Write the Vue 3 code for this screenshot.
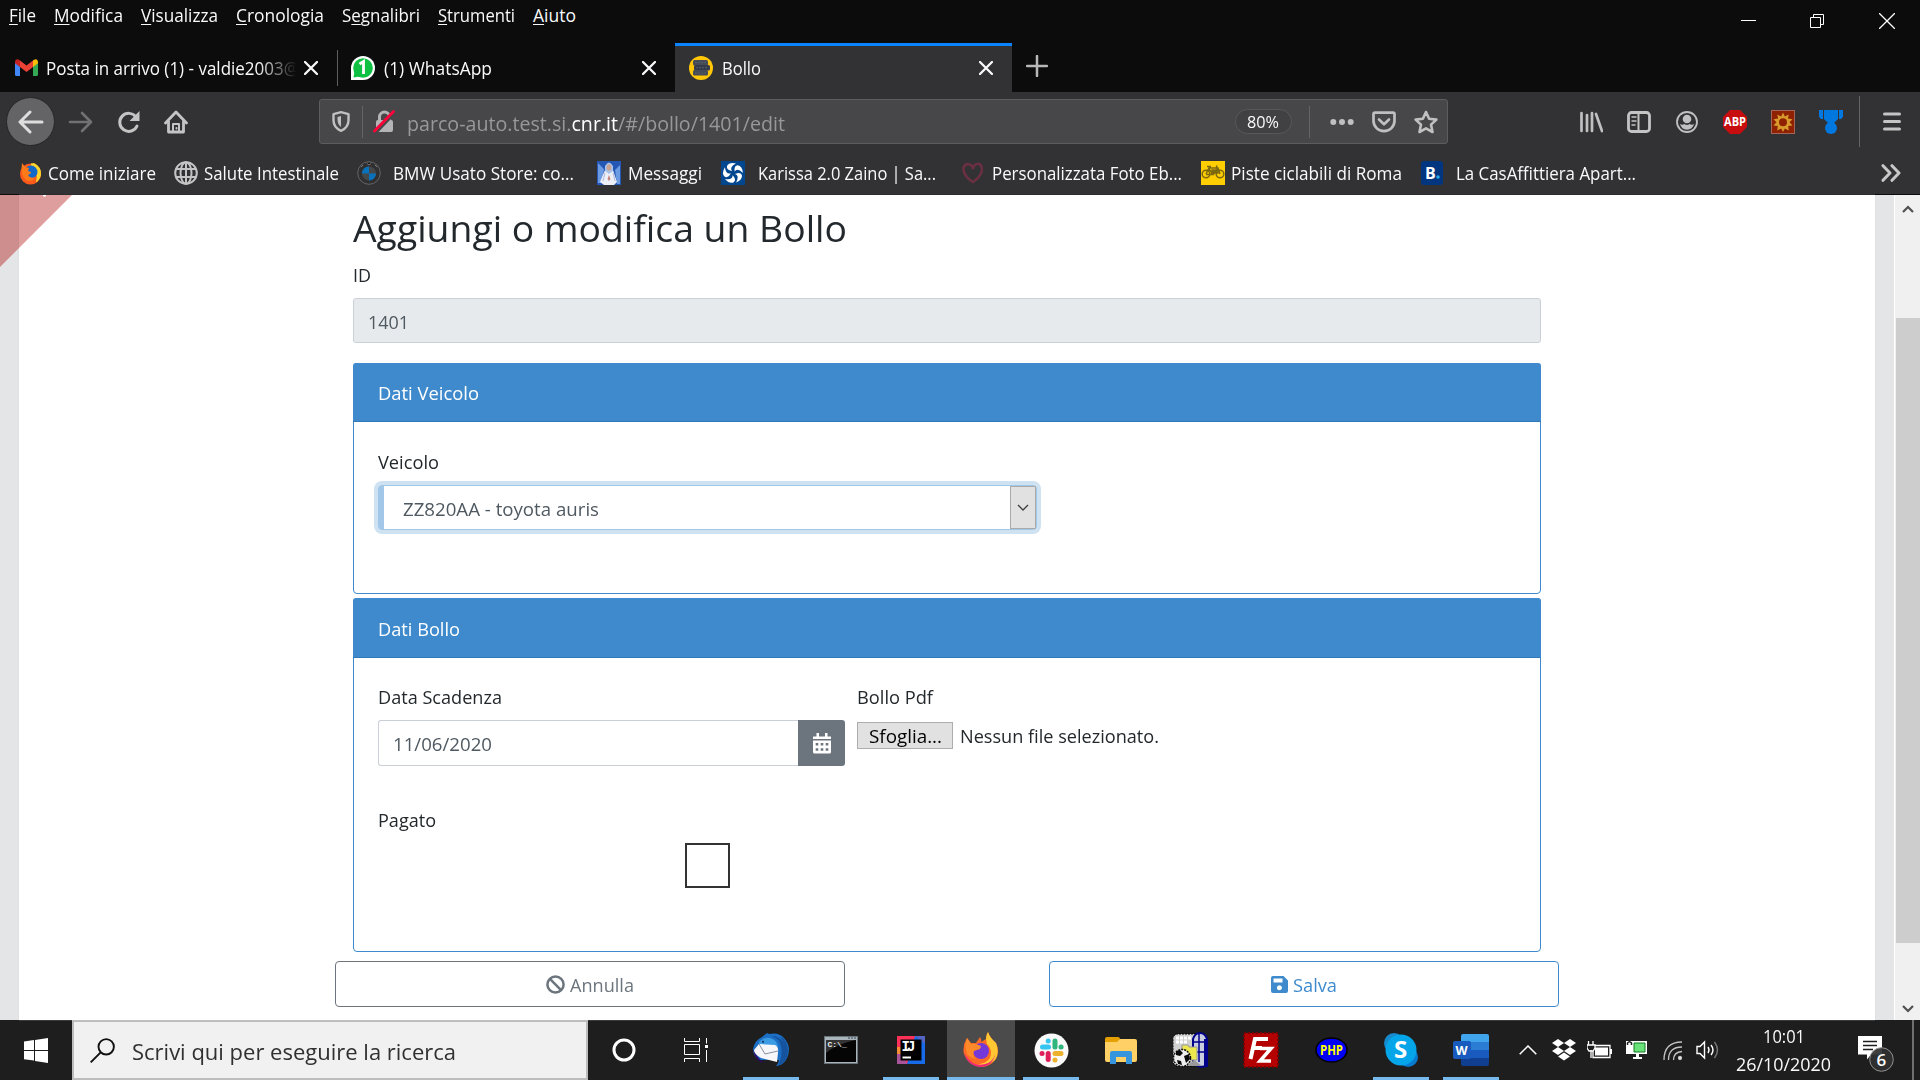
<script setup>
const menu = [
  { key: 'F', rest: 'ile', w: 27 },
  { key: 'M', rest: 'odifica', w: 69 },
  { key: 'V', rest: 'isualizza', w: 77 },
  { key: 'C', rest: 'ronologia', w: 88 },
  { pre: 'S', key: 'e', rest: 'gnalibri', w: 78 },
  { key: 'S', rest: 'trumenti', w: 77 },
  { key: 'A', rest: 'iuto', w: 43 },
]

// Condenses or widens a label horizontally to the width given in pixels
const vFit = {
  mounted(el, { value }) {
    const natural = el.getBoundingClientRect().width
    el.style.width = `${value}px`
    el.style.transform = `scaleX(${value / natural})`
  },
}
</script>

<template>
  <div class="screen">
    <header class="titlebar">
      <nav class="menu">
        <span v-for="m in menu" :key="m.rest" v-fit="m.w" class="fit">{{ m.pre }}<u>{{ m.key }}</u>{{ m.rest }}</span>
      </nav>
      <div class="winctl">
        <svg width="16" height="16" viewBox="0 0 16 16"><path d="M0 7.5h15" stroke="#fff" /></svg>
        <svg width="16" height="16" viewBox="0 0 16 16" fill="none" stroke="#fff"><path d="M.5 4.500h10v10h-10zM3.500 4.500v-3h10v10h-3" /></svg>
        <svg width="16" height="16" viewBox="0 0 16 16"><path d="M0 0l16 16M16 0L0 16" stroke="#fff" stroke-width="1.300" /></svg>
      </div>
    </header>

    <div class="tabs">
      <div class="tab first">
        <svg class="gmail" width="23" height="17" viewBox="0 0 23 17">
          <path d="M0 3l5 4v10H1.500Q0 17 0 15.500z" fill="#4285f4" /><path d="M23 3l-5 4v10h3.500q1.500 0 1.500-1.500z" fill="#34a853" />
          <path d="M5 1.500l6.500 5 6.500-5V8l-6.500 5L5 8z" fill="#ea4335" /><path d="M0 2.500Q1-1 4 .700L5 1.500V8L0 4.200z" fill="#c5221f" /><path d="M23 2.500Q22-1 19 .700L18 1.500V8l5-3.800z" fill="#fbbc04" />
        </svg>
        <div class="fade"><span v-fit="253" class="fit">Posta in arrivo (1) - valdie2003@</span></div>
        <svg class="x" width="14" height="14" viewBox="0 0 14 14"><path d="M1 1l12 12M13 1L1 13" /></svg>
      </div>
      <div class="tab second">
        <svg width="24" height="24" viewBox="0 0 24 24"><path d="M0 24V12A12 12 0 1 1 12 24z" fill="#fff" /><circle cx="12" cy="12" r="9.800" fill="#0fc143" /><path d="M2.500 21.500l1-6 5 5z" fill="#0fc143" /><path d="M8.500 8l4-2.500V18" fill="none" stroke="#fff" stroke-width="2.800" /></svg>
        <span v-fit="108" class="fit">(1) WhatsApp</span>
        <svg class="x" width="14" height="14" viewBox="0 0 14 14"><path d="M1 1l12 12M13 1L1 13" /></svg>
      </div>
      <div class="tab active">
        <svg width="24" height="24" viewBox="0 0 24 24"><circle cx="12" cy="12" r="12" fill="#ffc708" /><rect x="4" y="4" width="15" height="5.500" rx="1.500" fill="#454b57" /><rect x="5" y="9" width="16" height="5.500" rx="1.500" fill="#353b49" /><rect x="4" y="14" width="15" height="5.500" rx="1.500" fill="#454b57" /><path d="M6 6.500h12M7 11.700h12M6 17h12" stroke="#555c69" stroke-dasharray="2 1" /></svg>
        <span v-fit="39" class="fit">Bollo</span>
        <svg class="x" width="14" height="14" viewBox="0 0 14 14"><path d="M1 1l12 12M13 1L1 13" /></svg>
      </div>
      <svg class="plus" width="22" height="22" viewBox="0 0 22 22"><path d="M11 1v20M1 11h20" stroke="#b8b8b8" stroke-width="2.500" stroke-linecap="round" /></svg>
    </div>

    <div class="navbar">
      <div class="back"><svg width="26" height="24" viewBox="0 0 26 24" fill="none" stroke="#dedede" stroke-width="3" stroke-linecap="round" stroke-linejoin="round"><path d="M24 12H2M12 2L2 12l10 10" /></svg></div>
      <svg class="fwd" width="25" height="22" viewBox="0 0 25 22" fill="none" stroke="#717173" stroke-width="2.600" stroke-linecap="round" stroke-linejoin="round"><path d="M2 11h21M14 2l9 9-9 9" /></svg>
      <svg class="reload" width="24" height="24" viewBox="0 0 24 24"><path d="M19 7A9 9 0 1 0 20 16" fill="none" stroke="#c4c4c5" stroke-width="3" stroke-linecap="round" /><path d="M22.500 1v10h-10z" fill="#c4c4c5" /></svg>
      <svg class="home" width="24" height="24" viewBox="0 0 24 24" fill="none" stroke="#c4c4c5" stroke-width="2.800" stroke-linejoin="round" stroke-linecap="round"><path d="M1.500 13L12 2l10.500 11M4.500 11v11h15V11" /><path d="M9 21v-7h6v7" stroke-width="2" /><path d="M12.500 18v.500" stroke-width="2" /></svg>
      <div class="url">
        <svg class="shield" width="18" height="21" viewBox="0 0 18 21"><path d="M9 1.200l7.500 2v6c0 5-3.500 8.800-7.500 10.600C5 18 1.500 14.200 1.500 9.200v-6z" fill="none" stroke="#c0c0c1" stroke-width="2.400" stroke-linejoin="round" /><path d="M9 5v11Q5.500 13 5.500 8.500V6z" fill="#c0c0c1" /></svg>
        <i class="vr"></i>
        <svg class="lock" width="22" height="23" viewBox="0 0 22 23"><rect x="3" y="10" width="17" height="12" rx="2" fill="#b4b4b6" /><path d="M6.500 11V7a5 5 0 0 1 10 0v4" fill="none" stroke="#b4b4b6" stroke-width="3" /><path d="M3 22.500L21 3.500" stroke="#474749" stroke-width="3" /><path d="M1.500 21L20.500 1.500" stroke="#ff0039" stroke-width="2.800" stroke-linecap="round" /></svg>
        <span v-fit="378" class="fit address">parco-auto.test.si.<b>cnr.it</b>/#/bollo/1401/edit</span>
        <div class="pill"><span v-fit="32" class="fit">80%</span></div>
        <i class="vr wide"></i>
        <svg class="dots" width="24" height="8" viewBox="0 0 24 8" fill="#c0c0c1"><circle cx="3.300" cy="4" r="3" /><circle cx="12" cy="4" r="3" /><circle cx="20.700" cy="4" r="3" /></svg>
        <svg class="pocket" width="24" height="22" viewBox="0 0 24 22" fill="none" stroke="#c0c0c1" stroke-width="2.700" stroke-linecap="round" stroke-linejoin="round"><path d="M3 1.700h18q1.500 0 1.500 1.500v6.500a10.500 10.500 0 0 1-21 0V3.200Q1.500 1.700 3 1.700z" /><path d="M7 8.500l5 4.700 5-4.700" /></svg>
        <svg class="star" width="24" height="24" viewBox="0 0 24 24"><path d="M12 2l3.100 6.700 7.300.900-5.400 5 1.500 7.400-6.500-3.700L5.500 22 7 14.600l-5.400-5 7.300-.900z" fill="none" stroke="#c0c0c1" stroke-width="2.600" stroke-linejoin="round" /></svg>
      </div>
      <div class="tools">
        <svg width="24" height="24" viewBox="0 0 24 24" fill="none" stroke="#c0c0c1" stroke-width="2.700" stroke-linecap="round"><path d="M2.500 3v18M8 5v16M13 3v18M17 4l6 17" /></svg>
        <svg width="24" height="24" viewBox="0 0 24 24" fill="none" stroke="#c4c4c5" stroke-width="2.800"><rect x="1.500" y="2.500" width="21" height="19" rx="3" /><path d="M11.500 2v20" stroke-width="2" /><path d="M4.500 7h5M4.500 11h5M4.500 15h4" stroke-width="1.700" /></svg>
        <svg width="24" height="24" viewBox="0 0 24 24"><circle cx="12" cy="12" r="10" fill="none" stroke="#c0c0c1" stroke-width="1.800" /><circle cx="12" cy="9" r="4.300" fill="#c0c0c1" /><path d="M5 14q2 1.500 4.500 0 2.500 2.200 5 0 2.500 1.500 4.500 0-1.500 5.700-7 5.700T5 14z" fill="#c0c0c1" /></svg>
        <svg width="24" height="24" viewBox="0 0 24 24"><path d="M7 0h10l7 7v10l-7 7H7l-7-7V7z" fill="#c70d0d" /><text x="1" y="16.300" font-size="11.500" font-weight="700" fill="#fff" textLength="22" lengthAdjust="spacingAndGlyphs">ABP</text></svg>
        <svg width="24" height="24" viewBox="0 0 24 24"><rect x=".500" y=".500" width="23" height="23" fill="#8f2100" stroke="#a5665a" /><path d="M12 2.500l1.800 4 4-2-1 4 4.700.700-3 3 3 3.300-4.300.500.600 4.500-4-2L12 22l-1.800-3.500-4 2 .600-4.500-4.300-.500 3-3.300-3-3 4.700-.700-1-4 4 2z" fill="#d89b2b" /><circle cx="12" cy="12.300" r="4" fill="#8f2100" /></svg>
        <svg width="24" height="24" viewBox="0 0 24 24" fill="#0078e0"><path d="M0 0h4v9H2L0 7zM20 0h4v7l-2 2h-2zM5 0h14v9l-4 4H9L5 9z" /><circle cx="12" cy="18" r="6" /></svg>
      </div>
      <i class="vr menu-rule"></i>
      <svg class="burger" width="18" height="19" viewBox="0 0 18 19"><path d="M1.500 2h15M1.500 9.500h15M1.500 17h15" stroke="#c4c4c5" stroke-width="3" stroke-linecap="round" /></svg>
    </div>

    <div class="bookmarks">
      <svg width="24" height="24" viewBox="0 0 24 24"><circle cx="11.500" cy="13" r="10.500" fill="#ff5a1c" /><path d="M12 2.500l3-.500q8 4 7 12-1 5-5 7.500Q20 10 12 6z" fill="#ffd52d" /><circle cx="12" cy="11" r="6.500" fill="#1269c9" /><path d="M3 2l3 4 4 1-1 3 3 1q0 2-3 3 2 4 7 2-3 6-9 3-6-5-4-17z" fill="#ff7a18" /></svg>
      <span v-fit="108" class="fit g4 m18">Come iniziare</span>
      <svg width="24" height="24" viewBox="0 0 24 24" fill="none" stroke="#c4c4c5" stroke-width="2"><circle cx="12" cy="12" r="10.800" /><ellipse cx="12" cy="12" rx="5.500" ry="10.800" /><path d="M12 1v22M2 8h20M2 16h20" /></svg>
      <span v-fit="135" class="fit g6 m18">Salute Intestinale</span>
      <svg width="24" height="24" viewBox="0 0 24 24"><circle cx="12" cy="12" r="11.300" fill="#303033" stroke="#656567" /><circle cx="12" cy="12.500" r="7" fill="#45484a" /><path d="M12 12.500v-7a7 7 0 0 0-7 7zM12 12.500v7a7 7 0 0 0 7-7z" fill="#0872bd" /><path d="M4 6l2-2M10 2.500l2 1.500 2-1.500M18 4l2 2" stroke="#777" /></svg>
      <span v-fit="181" class="fit g12 m23">BMW Usato Store: co...</span>
      <svg width="24" height="24" viewBox="0 0 24 24"><path d="M0 0h24v24H0z" fill="#2456b4" /><path d="M1 2l6 6L5 22H1zM23 4l-5 5 2 14h3z" fill="#6d9be1" /><path d="M8 9q4-3 8 0l4 12-3 3H7l-4-3z" fill="#eef0f8" /><path d="M8 10V5q4-7 8 0v5l-4 3z" fill="#a8c2eb" /><ellipse cx="12" cy="6.500" rx="2.300" ry="3.200" fill="#c9a391" /><path d="M12 14l-1.500 4 1.500 2 1.500-2z" fill="#c3847b" /><path d="M8 12l-2 8M16 12l2 8" stroke="#aeb9d8" /></svg>
      <span v-fit="74" class="fit g7 m19">Messaggi</span>
      <svg width="24" height="24" viewBox="0 0 24 24"><path d="M0 0h24v24H0z" fill="#00478f" /><g fill="#fff"><path d="M15 2.500Q8 1 6 5q-1 4 5 5Q8 6 15 2.500z" /><path d="M15 2.500Q8 1 6 5q-1 4 5 5Q8 6 15 2.500z" transform="rotate(72 12 12)" /><path d="M15 2.500Q8 1 6 5q-1 4 5 5Q8 6 15 2.500z" transform="rotate(144 12 12)" /><path d="M15 2.500Q8 1 6 5q-1 4 5 5Q8 6 15 2.500z" transform="rotate(216 12 12)" /><path d="M15 2.500Q8 1 6 5q-1 4 5 5Q8 6 15 2.500z" transform="rotate(288 12 12)" /></g></svg>
      <span v-fit="178" class="fit g13 m26">Karissa 2.0 Zaino | Sa...</span>
      <svg width="22" height="22" viewBox="0 0 22 22"><path d="M11 7Q10 2 5 2 0 4 2 10t9 10q9-6 9-13-1-6-5-5-3 0-4 5" fill="none" stroke="#762f45" stroke-width="2.500" opacity=".85" /></svg>
      <span v-fit="190" class="fit g8 m19">Personalizzata Foto Eb...</span>
      <svg width="24" height="24" viewBox="0 0 24 24"><path d="M0 0h24v24H0z" fill="#ffcd00" /><g fill="none" stroke="#7d690f" stroke-width="1.500"><circle cx="5" cy="13" r="3.800" /><circle cx="19" cy="13" r="3.800" /><path d="M5 13l3-6h9l2 6M8 8l4 5.500H5M12 13.500L17 7M6 5.500h4M16 4.500l-1 3" /><path d="M11 9h6v3h-6z" fill="#7d690f" /></g></svg>
      <span v-fit="171" class="fit g6 m18">Piste ciclabili di Roma</span>
      <svg width="24" height="24" viewBox="0 0 24 24"><rect x="1" width="22" height="24" rx="3" fill="#003580" /><text x="5" y="17.500" font-size="16" font-weight="700" fill="#fff">B</text><circle cx="18" cy="16" r="1.800" fill="#22a7e5" /></svg>
      <span v-fit="180" class="fit g12">La CasAffittiera Apart...</span>
      <svg class="more" width="21" height="18" viewBox="0 0 21 18" fill="none" stroke="#c8c8c9" stroke-width="3" stroke-linecap="round" stroke-linejoin="round"><path d="M3 1.700L10 9l-7 7.300M12 1.700L19 9l-7 7.300" /></svg>
    </div>

    <main class="viewport">
      <div class="page">
        <h2><span v-fit="494" class="fit">Aggiungi o modifica un Bollo</span></h2>
        <div class="label"><span v-fit="18" class="fit">ID</span></div>
        <div class="control readonly"><span v-fit="41" class="fit">1401</span></div>

        <section class="card vehicle">
          <div class="card-head"><span v-fit="101" class="fit">Dati Veicolo</span></div>
          <div class="card-body">
            <div class="label"><span v-fit="61" class="fit">Veicolo</span></div>
            <div class="select">
              <span v-fit="196" class="fit">ZZ820AA - toyota auris</span>
              <div class="drop"><svg width="12" height="8" viewBox="0 0 12 8"><path d="M1 1l5 5 5-5" fill="none" stroke="#404040" stroke-width="1.400" /></svg></div>
            </div>
          </div>
        </section>

        <section class="card tax">
          <div class="card-head"><span v-fit="82" class="fit">Dati Bollo</span></div>
          <div class="card-body columns">
            <div class="col">
              <div class="label"><span v-fit="124" class="fit">Data Scadenza</span></div>
              <div class="datebox">
                <div class="control"><span v-fit="99" class="fit">11/06/2020</span></div>
                <div class="addon">
                  <svg width="18" height="21" viewBox="0 0 18 21"><path d="M0 3.500h18V6H0zM0 7.500h18V19q0 1.500-1.500 1.500h-15Q0 20.500 0 19zM3.500 0h2.500v4H3.500zM12 0h2.500v4H12z" fill="#fff" /><path d="M2.700 10h2.600v2.500H2.700zM7.700 10h2.600v2.500H7.700zM12.700 10h2.600v2.500h-2.600zM2.700 15.200h2.600v2.500H2.700zM7.700 15.200h2.600v2.500H7.700zM12.700 15.200h2.600v2.500h-2.600z" fill="#6c757d" /></svg>
                </div>
              </div>
              <div class="label paid"><span v-fit="58" class="fit">Pagato</span></div>
              <div class="check"></div>
            </div>
            <div class="col">
              <div class="label"><span v-fit="76" class="fit">Bollo Pdf</span></div>
              <div class="file">
                <div class="browse"><span v-fit="73" class="fit">Sfoglia...</span></div>
                <span v-fit="199" class="fit">Nessun file selezionato.</span>
              </div>
            </div>
          </div>
        </section>

        <div class="actions">
          <div class="btn cancel">
            <svg width="19" height="19" viewBox="0 0 19 19" fill="none" stroke="#6c757d" stroke-width="2.500"><circle cx="9.500" cy="9.500" r="8.100" /><path d="M3.700 3.700l11.600 11.600" /></svg>
            <span v-fit="64" class="fit">Annulla</span>
          </div>
          <div class="btn save">
            <svg width="17" height="17" viewBox="0 0 17 17"><path fill-rule="evenodd" d="M2 0h10.500L17 4.500V15q0 2-2 2H2q-2 0-2-2V2q0-2 2-2zM2.500 2.500v4h9v-4zM8.500 9.200a2.500 2.500 0 1 0 0 5 2.500 2.500 0 0 0 0-5z" fill="#3e8acc" /></svg>
            <span v-fit="44" class="fit">Salva</span>
          </div>
        </div>
      </div>
      <div class="scrollbar">
        <svg width="12" height="9" viewBox="0 0 12 9"><path d="M1 7l5-5 5 5" fill="none" stroke="#505050" stroke-width="2.200" /></svg>
        <div class="thumb"></div>
        <svg width="12" height="9" viewBox="0 0 12 9"><path d="M1 2l5 5 5-5" fill="none" stroke="#505050" stroke-width="2.200" /></svg>
      </div>
      <svg class="ribbon" width="72" height="72" viewBox="0 0 72 72"><path d="M0 0h72L0 72z" fill="#aa0000" opacity=".38" /><circle cx="44.500" cy="0" r="1.700" fill="#fff" /></svg>
    </main>

    <footer class="taskbar">
      <div class="start"><svg width="24" height="25" viewBox="0 0 24 25" fill="#fff"><path d="M0 3.500l10-1.400V12H0zM11 2l13-2v12H11zM0 13h10v9.500L0 21.200zM11 13h13v12l-13-2z" /></svg></div>
      <div class="search">
        <svg width="25" height="25" viewBox="0 0 25 25" fill="none" stroke="#111" stroke-width="1.900"><circle cx="16.200" cy="8.800" r="7.700" /><path d="M10.700 14.300L.700 24.300" /></svg>
        <span v-fit="324" class="fit">Scrivi qui per eseguire la ricerca</span>
      </div>
      <div class="slot"><svg width="24" height="24" viewBox="0 0 24 24"><circle cx="12" cy="12" r="10" fill="none" stroke="#fff" stroke-width="3" /></svg></div>
      <div class="slot view"><svg width="24" height="24" viewBox="0 0 24 24" fill="none" stroke="#fff" stroke-width="1"><path d="M.500 0v3.500h15V0M.500 24v-3.500h15V24M.500 6.500h15v10H.500zM22.500 0v5.500M22.500 12v12" /><path d="M21 7h3v3h-3z" fill="#fff" stroke="none" /></svg></div>
      <div class="slot running"><svg width="36" height="36" viewBox="0 0 36 36"><path d="M0 17Q2 8 9 5l5-4 2 1q10-2 15 4 8 9 3 20-3 7-11 8 3-3 3-6H6q-6-4-6-11z" fill="#1b6fc4" /><path d="M18 4q8 2 10 10 2 9-3 20 10-4 10-16Q34 8 27 4l5 9Q28 4 18 4z" fill="#16539e" /><path d="M6 10q4-5 11-4 7 2 8 9L6 14z" fill="#3b9be3" /><path d="M0 17q4 9 11 14-9-1-11-14z" fill="#2b0a66" /><path d="M6 12l16 1q4 2 3 8l-1 9-16-4q-7-4-7-8z" fill="#f7f7fa" /><path d="M6 12l6 10 13-3" fill="none" stroke="#8491a4" /><circle cx="10" cy="9.800" r="1" fill="#132856" /></svg></div>
      <div class="slot cmd"><svg width="34" height="28" viewBox="0 0 34 28"><rect x=".500" y=".500" width="33" height="27" fill="#a9b5bb" stroke="#68737a" /><path d="M2 4h30v22H2z" fill="#050505" /><path d="M2 4h30q-20 4-30 13z" fill="#333" /><path d="M24 2h2M27 2h2M30 2h2" stroke="#345" /><text x="3.500" y="11" font-size="8" font-weight="700" fill="#eee" class="mono">C:\_</text></svg></div>
      <div class="slot running"><svg width="28" height="28" viewBox="0 0 28 28"><path d="M0 0h28v28H0z" fill="#176be8" /><path d="M0 0h18l-8 28H0z" fill="#fc3158" /><path d="M0 12h7v8l3 8H0z" fill="#a9539b" /><path d="M0 11h4v7H0z" fill="#f28c35" /><path d="M18 0h10v8z" fill="#5565c4" /><path d="M3.500 3.500h21v21h-21z" fill="#000" /><text x="4.500" y="15" font-size="14" font-weight="700" fill="#fff" class="mono" textLength="14">IJ</text><path d="M5.500 20.500h8.500v2H5.500z" fill="#fff" /></svg></div>
      <div class="slot current"><svg width="36" height="36" viewBox="0 0 36 36"><path d="M4 6l4 5 5 0 4-6q2 3 1 5l5-3q0-4 2-7 2 6 8 11 4 8 0 16-6 8-15 8Q5 34 1 22-1 14 4 6z" fill="#ff6a25" /><path d="M23 7q0-4 2-7 2 6 8 11 4 10-1 17Q22 36 12 33q16-2 16-12 0-5-4-9z" fill="#ffc832" /><path d="M32 22q-2 8-10 10-12 3-18-7-2-2-3-5Q4 34 18 35q12-1 14-13z" fill="#f0287c" /><circle cx="18" cy="19" r="8" fill="#7438d8" /><path d="M4 6l4 6h5l5 2-1 3-6 2q-2 4 2 8-6-1-9-5-3-9 0-16z" fill="#ff8a29" /></svg></div>
      <div class="slot running"><svg width="35" height="35" viewBox="0 0 35 35"><circle cx="17.500" cy="17.500" r="17" fill="#fafafa" /><g stroke-width="5" stroke-linecap="round"><path d="M8.500 14h6M14.200 8v.100" stroke="#36c5f0" /><path d="M21 8v6M27 14h.100" stroke="#2eb67d" /><path d="M21 20.500h6M21 27v.100" stroke="#ecb22e" /><path d="M14.200 20.500v6M8 20.500h.100" stroke="#e01e5a" /></g></svg></div>
      <div class="slot"><svg width="32" height="27" viewBox="0 0 32 27"><path d="M0 2q0-2 2-2h11q2 0 2 3v6H0z" fill="#e5a000" /><path d="M0 5h12l3-3h15q2 0 2 2v19q0 2-2 2H2q-2 0-2-2z" fill="#ffd066" /><path d="M5 27V16q0-2 2-2h18q2 0 2 2v11h-6v-7H11v7z" fill="#3795dd" /></svg></div>
      <div class="slot"><svg width="36" height="36" viewBox="0 0 36 36"><path d="M3 2h28v32H3L0 31V5z" fill="#d0d0d0" stroke="#000" stroke-dasharray="2 1" /><path d="M3 6h15M3 10h12" stroke="#fff" stroke-width="3" stroke-dasharray="3 1" /><path d="M20 32V7q2-6 7-6 5 0 7 6v27l-6 1z" fill="#c9cde0" stroke="#00008b" stroke-width="2" /><path d="M33 7v27" stroke="#00008b" stroke-width="4" /><path d="M26 2v28M20 10h12M20 20h12" stroke="#00008b" stroke-width="1.500" /><path d="M9 13h6l1 2h8v13H9z" fill="#ece84e" stroke="#999" /><circle cx="9" cy="26" r="8.500" fill="#eee" stroke="#111" stroke-width="1.500" stroke-dasharray="2 1" /><path d="M3 19l4-1 3 3-3 3-4-1zM11 24l5-2 1 5-4 4zM4 28l4 1 1 4-4-1z" fill="#090909" /><path d="M15 33l6-5 8 6H15z" fill="#999" /></svg></div>
      <div class="slot"><svg width="36" height="36" viewBox="0 0 36 36"><path d="M1 1h34v34H1z" fill="#b40000" stroke="#770000" stroke-width="2" stroke-dasharray="2 2" /><path d="M7.500 27L12 7h13M10 16h9" fill="none" stroke="#fff" stroke-width="4" /><path d="M17 16.500h11L17 29h11" fill="none" stroke="#fff" stroke-width="3.500" /></svg></div>
      <div class="slot"><svg width="33" height="26" viewBox="0 0 33 26"><ellipse cx="16.500" cy="13" rx="15.500" ry="12" fill="#0000f5" stroke="#000" stroke-width="1.500" /><text x="5" y="17.800" font-size="14.500" font-weight="700" fill="#ff0" textLength="23" lengthAdjust="spacingAndGlyphs">PHP</text></svg></div>
      <div class="slot running"><svg width="34" height="34" viewBox="0 0 34 34"><circle cx="10" cy="10" r="10" fill="#168acd" /><circle cx="24" cy="24" r="10" fill="#087bd0" /><circle cx="17" cy="17" r="15.500" fill="#05a5ea" /><text x="10" y="25" font-size="24" font-weight="700" fill="#fff">S</text></svg></div>
      <div class="slot running word"><svg width="36" height="32" viewBox="0 0 36 32"><path d="M10 0h24q2 0 2 2v6H8V2q0-2 2-2z" fill="#41a5ee" /><path d="M8 8h28v8H8z" fill="#2b7cd3" /><path d="M8 16h28v8H8z" fill="#185abd" /><path d="M8 24h28v6q0 2-2 2H10q-2 0-2-2z" fill="#103f91" /><rect y="7" width="18" height="18" rx="2" fill="#185abd" /><text x="2.500" y="20.500" font-size="12.500" font-weight="700" fill="#fff">W</text></svg></div>

      <div class="tray">
        <svg class="up" width="18" height="10" viewBox="0 0 18 10"><path d="M.700 9.300L9 1l8.300 8.300" fill="none" stroke="#fff" stroke-width="1.500" /></svg>
        <svg class="dropbox" width="24" height="22" viewBox="0 0 24 22" fill="#fff"><path d="M6 0l6 4-6 4-6-4zM18 0l6 4-6 4-6-4zM6 8l6 4-6 4-6-4zM18 8l6 4-6 4-6-4zM12 13.500l6 4-6 4-6-4z" /></svg>
        <svg class="batt" width="25" height="18" viewBox="0 0 25 18"><path d="M6 4.500h17v12H6z" fill="none" stroke="#fff" stroke-width="1.300" /><path d="M8 6.500h13v8H8zM23 8h2v5h-2z" fill="#fff" /><path d="M0 4h8v3l-2 3H2L0 7zM1.500 0v4M6 0v4M4 9v8" fill="#1e1e1e" stroke="#fff" stroke-width="1.300" /></svg>
        <svg class="monitor" width="23" height="20" viewBox="0 0 23 20"><path d="M1 1h21v13h-8v3h3v2H8v-2h3v-3H1z" fill="#fff" /><path d="M9 3h11v9H9z" fill="#69e279" stroke="#107a22" /><path d="M2.500 5V3q2-2.500 4 0v2" fill="none" stroke="#1e1e1e" stroke-width="1.500" /></svg>
        <svg class="wifi" width="20" height="20" viewBox="0 0 20 20" fill="none" stroke="#c5c5c5" stroke-width="1.300"><path d="M1 19Q1 1 19 1M5.500 19Q5.500 6 19 6M10.500 19q0-8 8.500-8.500" /><circle cx="17" cy="17" r="1.500" fill="#fff" /></svg>
        <svg class="sound" width="23" height="20" viewBox="0 0 23 20" fill="none" stroke="#fff" stroke-width="1.400"><path d="M1 6.500h3L8.500 2v16L4 13.500H1z" /><path d="M12 7q2 3 0 6M15 5q4 5 0 10" /><path d="M18.500 2q6 8 0 16" stroke="#777" /></svg>
        <div class="clock"><span v-fit="42" class="fit">10:01</span><span v-fit="95" class="fit">26/10/2020</span></div>
        <svg class="notice" width="38" height="38" viewBox="0 0 38 38"><path d="M1 1h24v18.500H14l-4 5v-5H1z" fill="#fff" /><path d="M6 6.500h14M6 10.500h14M6 14.500h10" stroke="#1e1e1e" stroke-width="1.300" /><circle cx="24.500" cy="24.500" r="11.800" fill="#303030" fill-opacity=".93" stroke="#909090" /><text x="19.500" y="30.500" font-size="17" font-weight="600" fill="#fff">6</text></svg>
        <i class="desk"></i>
      </div>
    </footer>
  </div>
</template>

<style>
body { margin: 0; overflow: hidden; }
</style>

<style scoped>
* { box-sizing: border-box; }
.screen { width: 1920px; height: 1080px; display: flex; flex-direction: column; background: #0c0c0d; color: #f9f9fa; font: 17.5px/28px "Open Sans", "Noto Sans", sans-serif; overflow: hidden; }
svg { flex: none; display: block; }
.fit { display: inline-block; white-space: nowrap; flex: none; transform-origin: left center; text-align: left; }
.mono { font-family: "Liberation Mono", monospace; }
.vr { flex: none; width: 1px; background: #636368; }

.titlebar { height: 43px; display: flex; justify-content: space-between; }
.menu { display: flex; gap: 18px; padding: 1px 0 0 9px; height: 30px; }
.menu u { text-decoration-thickness: 1px; text-underline-offset: 2px; }
.winctl { display: flex; gap: 53px; padding: 13px 25px 0 0; height: 30px; }

.tabs { height: 49px; display: flex; }
.tab { display: flex; align-items: center; }
.x { stroke: #f9f9fa; stroke-width: 2.300; stroke-linecap: round; }
.first { width: 338px; padding-left: 15px; gap: 8px; background: linear-gradient(#5d5d5e, #5d5d5e) right center / 1px 36px no-repeat; }
.first .x { margin-left: -1px; }
.fade { width: 251px; height: 28px; overflow: hidden; -webkit-mask-image: linear-gradient(90deg, #000 212px, transparent 251px); mask-image: linear-gradient(90deg, #000 212px, transparent 251px); }
.second { width: 337px; padding: 0 19px 0 13px; }
.active { width: 337px; padding: 0 19px 0 14px; background: #323234; border-top: 3px solid #0a84ff; }
.active > * { position: relative; top: -1px; }
.second .fit, .active .fit { margin-left: 9px; }
.second .x, .active .x { margin-left: auto; }
.plus { margin: 12px 0 0 14px; }

.navbar { height: 60px; padding-bottom: 1px; background: #323234; display: flex; align-items: center; }
.back { width: 49px; height: 49px; margin-left: 6px; border-radius: 50%; background: #646466; border: 1px solid #252526; display: flex; align-items: center; justify-content: center; }
.fwd { margin-left: 13px; }
.reload { margin-left: 24px; }
.home { margin-left: 23px; }
.url { margin-left: 131px; width: 1129px; height: 45px; border: 1px solid #5d5d60; border-radius: 3px; background: #474749; display: flex; align-items: center; }
.shield { margin-left: 12px; }
.url .vr { height: 32px; margin-left: 12px; }
.url .lock { margin-left: 10px; }
.address { margin-left: 12px; font-size: 20.5px; color: #98989a; padding-top: 2px; }
.address b { font-weight: 400; color: #fff; }
.pill { margin-left: 450px; width: 57px; height: 25px; border: 1px solid #58585a; border-radius: 13px; background: #414143; font-size: 16px; line-height: 25px; padding-left: 11px; }
.url .wide { margin-left: 17px; }
.dots { margin-left: 20px; }
.pocket { margin-left: 18px; }
.star { margin-left: 18px; }
.tools { display: flex; gap: 24px; margin-left: 131px; }
.menu-rule { height: 51px; margin-left: 16px; }
.burger { margin-left: 23px; }

.bookmarks { height: 43px; background: #323234; border-bottom: 1px solid #0c0c0d; display: flex; align-items: center; padding: 0 19px 1px 19px; }
.bookmarks .fit { padding-top: 1px; }
.g4 { margin-left: 5px; }
.g6 { margin-left: 6px; }
.g7 { margin-left: 7px; }
.g8 { margin-left: 8px; }
.g12 { margin-left: 12px; }
.g13 { margin-left: 13px; }
.m18 { margin-right: 18px; }
.m19 { margin-right: 19px; }
.m23 { margin-right: 23px; }
.m26 { margin-right: 26px; }
.more { margin-left: auto; }

.viewport { position: relative; height: 825px; display: flex; background: #e4e5e6; padding-left: 19px; font-size: 18.5px; color: #23282c; }
.page { width: 1856px; background: #fff; padding: 10px 334px 0 334px; box-shadow: 0 0 1px #c8ced3; }
h2 { margin: 0; font-size: 37px; line-height: 46px; font-weight: 400; height: 46px; }
.label { height: 28px; margin: 0 0 9px; display: flex; }
h2 + .label { margin-top: 10px; }
.control { height: 45px; padding: 9px 14px 0; border: 1px solid #cbd0d8; border-radius: 3px; color: #4f5961; }
.readonly { background: #e7eaed; }
.card { border: 1px solid #3e8acc; border-radius: 4px; }
.card-head { height: 58px; margin: -1px -1px 0; padding: 16px 25px 0; background: #3e8acc; border-bottom: 1px solid #3078b6; border-radius: 3px 3px 0 0; color: #fff; }
.card-body { padding: 26px 24px 0; }
.vehicle { margin-top: 20px; height: 231px; }
.vehicle .card-head { height: 59px; }
.tax { margin-top: 4px; height: 354px; }
.tax .card-head { height: 60px; padding-top: 17px; }
.tax .card-body { padding-top: 25px; }
.select { width: 659px; height: 45px; border: 1px solid #a3c7e8; border-left-width: 6px; border-radius: 4px; box-shadow: 0 0 0 4px #cfe2f2; display: flex; justify-content: space-between; padding-left: 19px; line-height: 45px; color: #4f5961; }
.drop { width: 26px; border: 1px solid #aaa; background: #e1e1e1; display: flex; align-items: center; justify-content: center; padding-right: 1px; }
.columns { display: flex; }
.col:first-child { width: 479px; }
.datebox { display: flex; width: 467px; height: 46px; }
.datebox .control { width: 420px; height: 46px; border-right: 0; border-radius: 3px 0 0 3px; padding-top: 9px; }
.addon { width: 47px; background: #6c757d; border-radius: 0 3px 3px 0; display: flex; align-items: center; justify-content: center; }
.paid { margin-top: 40px; }
.check { width: 45px; height: 45px; margin-left: 307px; border: 2px solid #333; }
.file { display: flex; align-items: center; gap: 7px; margin-top: 11px; height: 27px; }
.browse { width: 96px; height: 27px; border: 1px solid #adadad; background: #e1e1e1; color: #000; padding-left: 11px; line-height: 26px; }
.actions { display: flex; justify-content: space-between; margin: 9px -18px 0; }
.btn { width: 510px; height: 46px; border: 1px solid #6c757d; border-radius: 4px; display: flex; align-items: center; justify-content: center; gap: 5px; padding-top: 1px; color: #6c757d; }
.btn svg { margin-top: -1px; }
.save { border-color: #3e8acc; color: #3e8acc; }
.scrollbar { margin-left: 19px; width: 26px; background: #f0f0f0; border-left: 1px solid #fff; display: flex; flex-direction: column; align-items: center; padding: 10px 0 7px; }
.thumb { width: 24px; height: 625px; margin: 104px 0 auto; background: #cdcdcd; }
.ribbon { position: absolute; left: 0; top: 0; }

.taskbar { height: 60px; background: #1e1e1e; display: flex; }
.start { width: 72px; display: flex; align-items: center; justify-content: center; }
.search { width: 516px; border: 2px solid #bdbdbd; background: #f1f1f1; display: flex; align-items: center; padding-left: 16px; gap: 17px; font-size: 21.5px; color: #303030; }
.search .fit { padding-top: 3px; }
.slot { flex: none; width: 70px; display: flex; align-items: center; justify-content: center; }
.search + .slot { margin-left: 1px; }
.view { margin: 0 5px 0 2px; }
.cmd { padding-right: 1px; }
.running { background: linear-gradient(#76b9ed, #76b9ed) center bottom / 56px 3px no-repeat; }
.current { width: 68px; margin: 0 1px; background: #4b4b4b; border-bottom: 3px solid #76b9ed; }
.current svg { position: relative; top: 1px; }
.tray { display: flex; flex: 1; align-items: center; }
.up { margin-left: 13px; }
.dropbox { margin-left: 15px; }
.batt { margin-left: 11px; }
.monitor { margin-left: 13px; }
.wifi { margin: 2px 0 0 15px; }
.sound { margin-left: 13px; }
.clock { margin-left: 17px; width: 95px; display: flex; flex-direction: column; align-items: center; line-height: 28px; }
.notice { margin: 7px 0 0 26px; }
.desk { width: 2px; height: 60px; margin-left: 17px; background: #707070; }
</style>
